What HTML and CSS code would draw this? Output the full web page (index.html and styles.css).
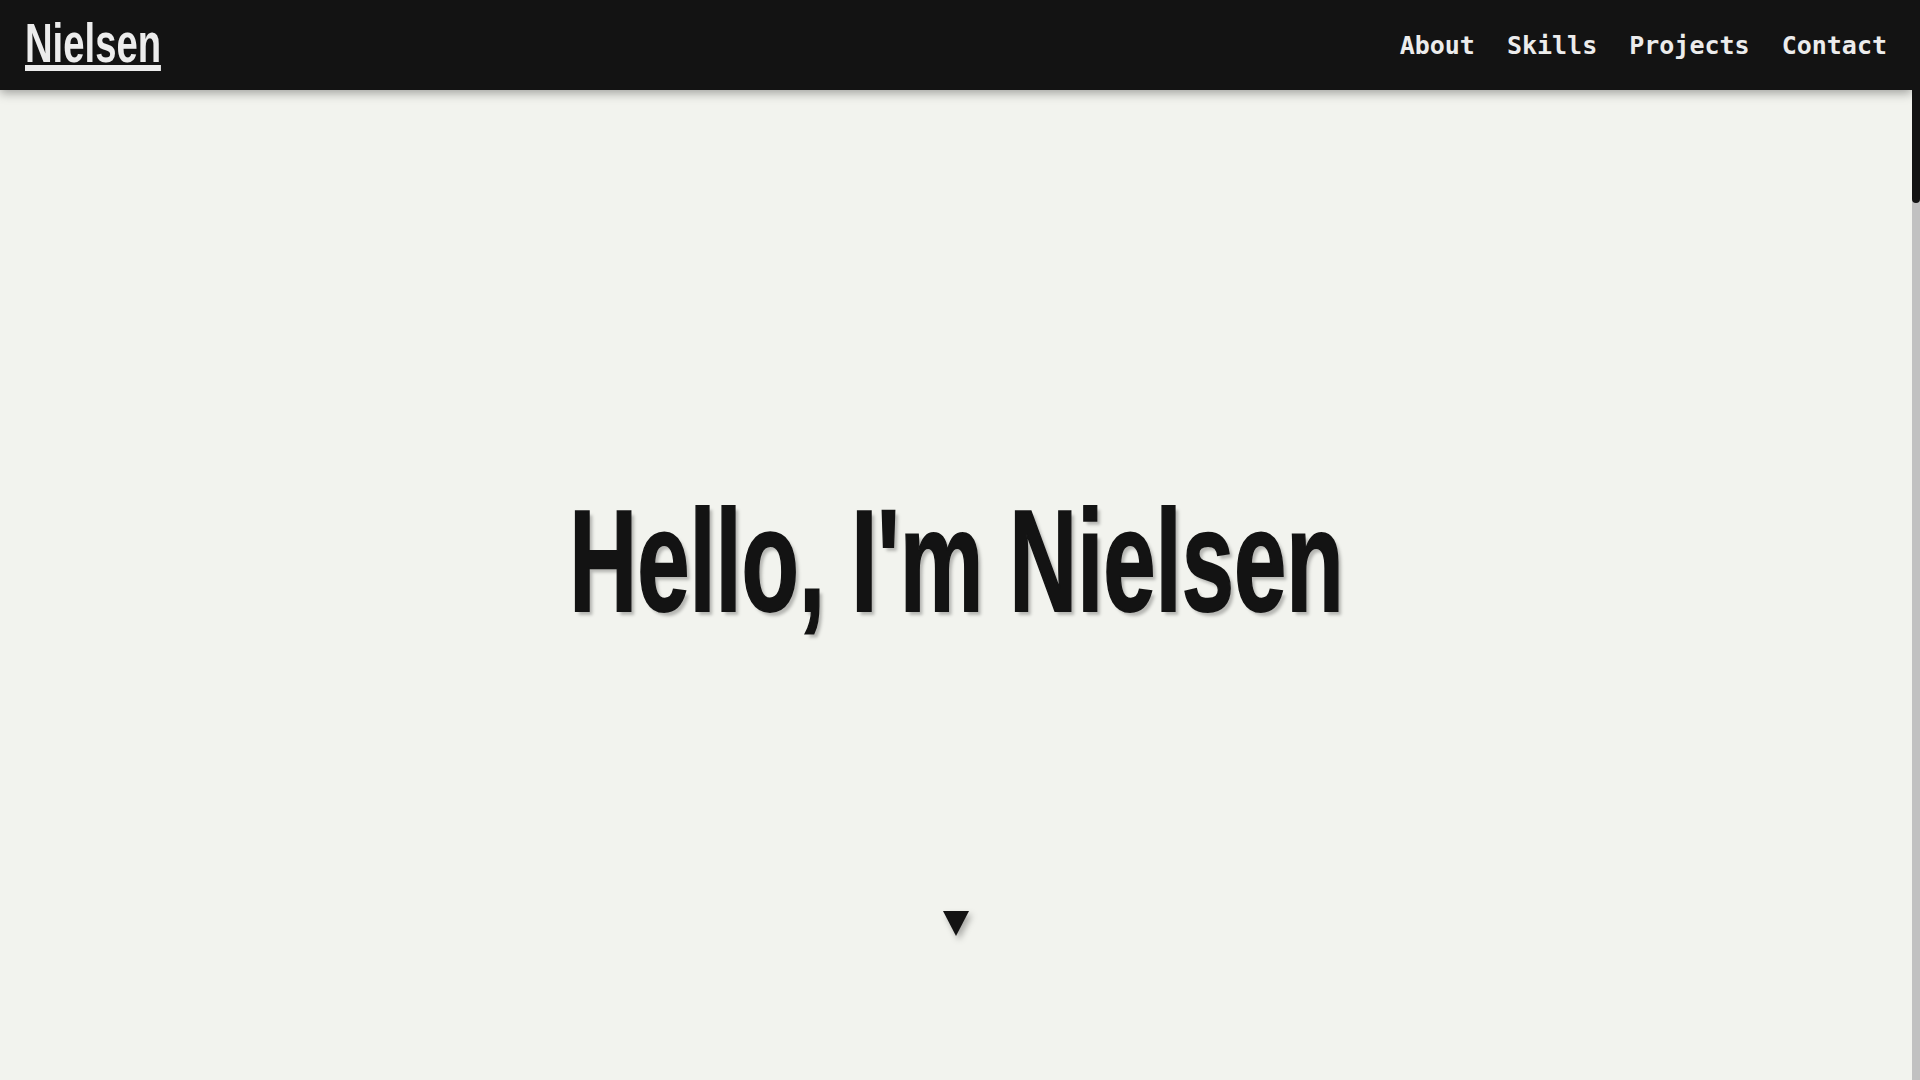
FILE: index.html
```html
<!DOCTYPE html>
<html lang="en">
<head>
<meta charset="utf-8">
<title>Nielsen</title>
<link rel="stylesheet" href="styles.css">
</head>
<body>
<div class="page">
  <header class="site-header">
    <a class="logo" href="#top"><span class="logo-text">Nielsen</span></a>
    <nav class="nav">
      <a href="#about">About</a>
      <a href="#skills">Skills</a>
      <a href="#projects">Projects</a>
      <a href="#contact">Contact</a>
    </nav>
  </header>
  <main>
    <section class="hero" id="top">
      <h1 class="hero-title"><span class="hero-text">Hello, I'm Nielsen</span></h1>
      <a class="scroll-down" href="#about" aria-label="Scroll down">
        <svg width="26" height="25" viewBox="0 0 26 25"><polygon points="0,0 26,0 13,25" fill="#131313"/></svg>
      </a>
    </section>
    <section class="section" id="about" aria-label="About"></section>
    <section class="section" id="skills" aria-label="Skills"></section>
    <section class="section" id="projects" aria-label="Projects"></section>
    <section class="section section-last" id="contact" aria-label="Contact"></section>
  </main>
</div>
<div class="scroll-rail" aria-hidden="true"><div class="scroll-thumb"></div></div>
</body>
</html>
```
FILE: styles.css
```css
body {
  margin: 0;
  display: flex;
  align-items: flex-start;
  background: #f2f3ee;
  color: #131313;
  font-family: "Liberation Sans", Arial, sans-serif;
}
.page {
  flex: 1;
  min-width: 0;
}
.scroll-rail {
  position: sticky;
  top: 0;
  z-index: 20;
  flex: 0 0 8px;
  height: 100vh;
  background: #c1c1c1;
}
.scroll-thumb {
  height: 203px;
  background: #131313;
  border-radius: 0 0 4px 4px;
}
.site-header {
  position: sticky;
  top: 0;
  z-index: 10;
  height: 90px;
  box-sizing: border-box;
  padding: 0 25px;
  background: #131313;
  display: flex;
  align-items: center;
  justify-content: space-between;
  box-shadow: 0 3px 10px rgba(0, 0, 0, 0.35);
}
.logo {
  display: block;
  color: #ececec;
  text-decoration: none;
  transform: scaleX(0.683);
  transform-origin: left center;
}
.logo-text {
  display: block;
  font-family: "Liberation Sans", Arial, sans-serif;
  font-weight: 700;
  font-size: 56px;
  line-height: 45px;
  border-bottom: 6px solid #ececec;
}
.nav {
  display: flex;
  gap: 32px;
}
.nav a {
  color: #ececec;
  text-decoration: none;
  font-family: "DejaVu Sans Mono", "Liberation Mono", monospace;
  font-weight: 700;
  font-size: 25px;
}
.hero {
  height: calc(100vh - 90px);
  box-sizing: border-box;
  padding-top: 399px;
  display: flex;
  flex-direction: column;
  align-items: center;
}
.hero-title {
  margin: 0;
  font-family: "Liberation Sans", Arial, sans-serif;
  font-weight: 700;
  font-size: 145px;
  line-height: 1;
  white-space: nowrap;
  transform: scaleX(0.648);
  transform-origin: center;
}
.hero-text {
  -webkit-text-stroke: 2px #131313;
  text-shadow: 5px 4px 4px rgba(0, 0, 0, 0.25);
}
.scroll-down {
  display: block;
  margin-top: 277px;
  width: 26px;
  height: 25px;
  filter: drop-shadow(3px 4px 3px rgba(0, 0, 0, 0.3));
}
.scroll-down svg {
  display: block;
}
.section {
  height: 100vh;
}
.section-last {
  height: calc(100vh + 346px);
}
```
